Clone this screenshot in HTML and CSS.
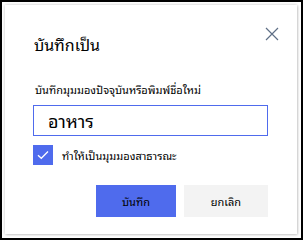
FILE: index.html
```html
<!DOCTYPE html>
<html lang="th">
<head>
<meta charset="utf-8">
<link rel="stylesheet" href="styles.css">
</head>
<body>
<div class="frame">
  <div class="dialog">
    <div class="header">
      <h1 class="title">บันทึกเป็น</h1>
      <button class="close" aria-label="ปิด">
        <svg width="14" height="14" viewBox="0 0 14 14"><path d="M1 1L13 13M13 1L1 13" stroke="#5f6f86" stroke-width="1.2" fill="none"/></svg>
      </button>
    </div>
    <div class="body">
      <label class="label">บันทึกมุมมองปัจจุบันหรือพิมพ์ชื่อใหม่</label>
      <div class="input">อาหาร</div>
      <div class="check-row">
        <span class="checkbox">
          <svg width="12" height="10" viewBox="0 0 12 10"><path d="M1 5.2L4.3 8.3L11 1.5" stroke="#fff" stroke-width="1.3" fill="none"/></svg>
        </span>
        <span class="check-label">ทำให้เป็นมุมมองสาธารณะ</span>
      </div>
    </div>
    <div class="footer">
      <button class="btn primary">บันทึก</button>
      <button class="btn secondary">ยกเลิก</button>
    </div>
  </div>
</div>
</body>
</html>
```

FILE: styles.css
```css
* { box-sizing: border-box; }
html, body { margin: 0; padding: 0; background: #fff; }
body { font-family: Tahoma, "Noto Sans Thai Looped", "Noto Serif Thai", "Noto Sans Thai", "Noto Sans", "DejaVu Sans", sans-serif; color: #000; }
.frame {
  width: 303px;
  height: 240px;
  border: 2px solid #000;
  padding: 3px 4px 4px 3px;
  background: #fff;
}
.dialog {
  width: 292px;
  height: 229px;
  background: #fff;
  box-shadow: 0 0 3px rgba(0,0,0,0.22), 1px 1px 2px rgba(0,0,0,0.12);
  display: flex;
  flex-direction: column;
}
.header {
  display: flex;
  justify-content: space-between;
  align-items: flex-start;
  padding: 22px 18px 0 29px;
  height: 62px;
}
.title {
  margin: 7px 0 0;
  font-size: 16px;
  font-weight: normal;
  line-height: 20px;
}
.close {
  border: 0;
  background: none;
  padding: 0;
  width: 14px;
  height: 14px;
}
.body {
  padding: 15px 29px 0 28px;
  display: flex;
  flex-direction: column;
}
.label {
  font-size: 11px;
  line-height: 15px;
  padding-left: 2px;
}
.input {
  margin-top: 8px;
  height: 31px;
  border: 1px solid #4f6bed;
  font-size: 18px;
  line-height: 28px;
  padding-left: 14px;
}
.check-row {
  display: flex;
  align-items: center;
  margin-top: 9px;
  gap: 9px;
}
.checkbox {
  width: 20px;
  height: 20px;
  background: #4f6bed;
  display: flex;
  align-items: center;
  justify-content: center;
}
.check-label {
  font-size: 11px;
  line-height: 15px;
}
.footer {
  display: flex;
  justify-content: flex-end;
  gap: 8px;
  padding: 20px 29px 0 0;
}
.btn {
  height: 32px;
  border: 0;
  font-family: inherit;
  font-size: 11px;
  color: #000;
  padding: 0;
}
.primary { width: 80px; background: #4f6bed; }
.secondary { width: 84px; background: #f3f3f3; }
```
